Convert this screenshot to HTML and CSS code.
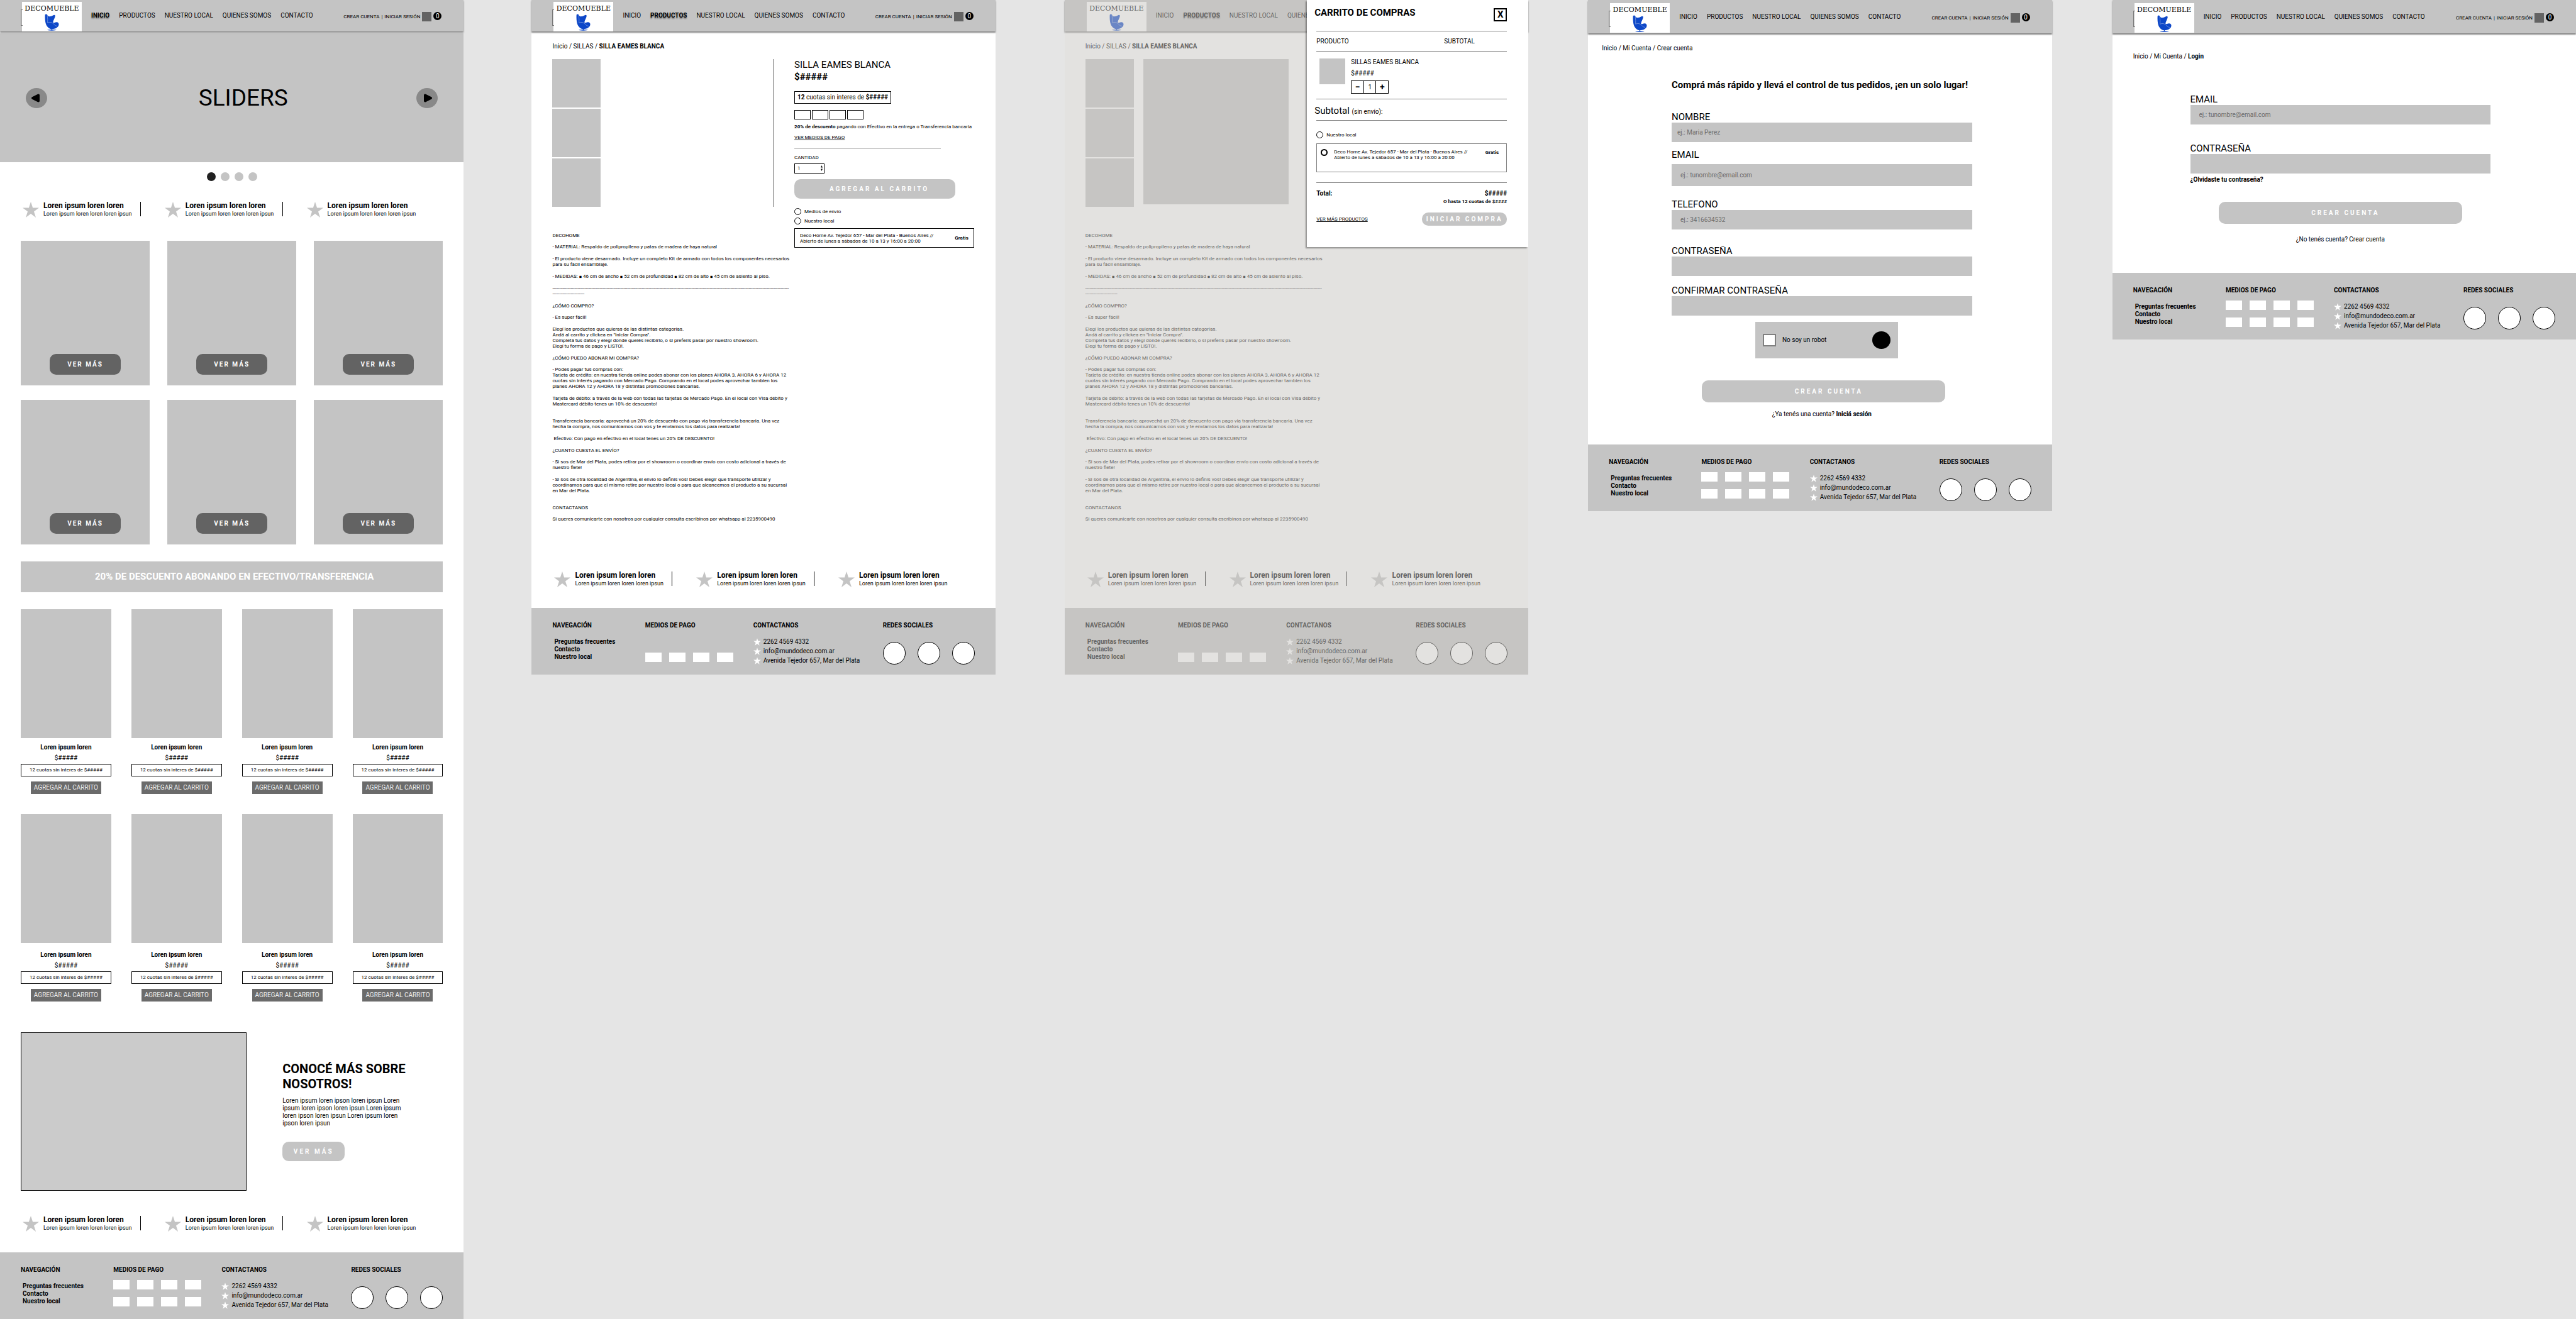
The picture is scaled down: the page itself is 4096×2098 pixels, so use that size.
FILE: index.html
```html
<!DOCTYPE html>
<html lang="es">
<head>
<meta charset="utf-8">
<title>Decomueble</title>
<link rel="stylesheet" href="styles.css">
</head>
<body>
<svg class="defs" aria-hidden="true">
  <symbol id="star" viewBox="0 0 26 25"><path d="M13 0l3.1 9.5H26l-8 5.9 3 9.6-8-5.9-8 5.9 3-9.6-8-5.9h9.9z"/></symbol>
  <symbol id="chair" viewBox="259 126 136 162">
    <path fill="#0d47c8" d="M262 135Q270 123 282 133Q286 150 300 152Q325 151 338 141Q350 131 358 141Q360 154 350 172Q337 196 338 208Q345 214 361 207Q380 202 390 214Q397 228 388 244Q370 268 330 271L330 276Q370 276 370 281Q365 286 326 286Q285 286 283 281Q285 276 323 276L323 271Q295 268 275 235Q258 200 262 135Z"/>
    <path fill="none" stroke="#b9c8ea" stroke-width="3" d="M283 140Q289 180 286 212Q318 196 345 224Q360 244 378 243"/>
  </symbol>
</svg>
<main class="canvas">

<section class="board board-home">
  <header class="top">
    <a class="logo" href="#">DECOMUEBLE<svg class="chair"><use href="#chair"/></svg></a>
    <nav class="menu"><a class="current" href="#">INICIO</a><a href="#">PRODUCTOS</a><a href="#">NUESTRO LOCAL</a><a href="#">QUIENES SOMOS</a><a href="#">CONTACTO</a></nav>
    <div class="account"><a href="#">CREAR CUENTA</a><span>|</span><a href="#">INICIAR SESIÓN</a><i class="bag"></i><b class="count">0</b></div>
  </header>
  <div class="slider">
    <button class="arrow" type="button" aria-label="Anterior"><svg viewBox="0 0 34 32"><path d="M11 16l9-4.500v9z" stroke-width="4" stroke="#000" stroke-linejoin="round"/></svg></button>
    <h1>SLIDERS</h1>
    <button class="arrow" type="button" aria-label="Siguiente"><svg viewBox="0 0 34 32"><path d="M23 16l-9-4.500v9z" stroke-width="4" stroke="#000" stroke-linejoin="round"/></svg></button>
  </div>
  <div class="dots"><i class="on"></i><i></i><i></i><i></i></div>
  <ul class="perks">
    <li><svg><use href="#star"/></svg><p><b>Loren ipsum loren loren</b>Loren ipsum loren loren loren ipsun</p></li>
    <li><svg><use href="#star"/></svg><p><b>Loren ipsum loren loren</b>Loren ipsum loren loren loren ipsun</p></li>
    <li><svg><use href="#star"/></svg><p><b>Loren ipsum loren loren</b>Loren ipsum loren loren loren ipsun</p></li>
  </ul>
  <div class="categories">
    <div><button type="button">VER MÁS</button></div>
    <div><button type="button">VER MÁS</button></div>
    <div><button type="button">VER MÁS</button></div>
    <div><button type="button">VER MÁS</button></div>
    <div><button type="button">VER MÁS</button></div>
    <div><button type="button">VER MÁS</button></div>
  </div>
  <p class="promo">20% DE DESCUENTO ABONANDO EN EFECTIVO/TRANSFERENCIA</p>
  <div class="products">
    <article><div class="photo"></div><h3>Loren ipsum loren</h3><p class="price">$#####</p><p class="fees">12 cuotas sin interes de $#####</p><button type="button">AGREGAR AL CARRITO</button></article>
    <article><div class="photo"></div><h3>Loren ipsum loren</h3><p class="price">$#####</p><p class="fees">12 cuotas sin interes de $#####</p><button type="button">AGREGAR AL CARRITO</button></article>
    <article><div class="photo"></div><h3>Loren ipsum loren</h3><p class="price">$#####</p><p class="fees">12 cuotas sin interes de $#####</p><button type="button">AGREGAR AL CARRITO</button></article>
    <article><div class="photo"></div><h3>Loren ipsum loren</h3><p class="price">$#####</p><p class="fees">12 cuotas sin interes de $#####</p><button type="button">AGREGAR AL CARRITO</button></article>
  </div>
  <div class="products products-more">
    <article><div class="photo"></div><h3>Loren ipsum loren</h3><p class="price">$#####</p><p class="fees">12 cuotas sin interes de $#####</p><button type="button">AGREGAR AL CARRITO</button></article>
    <article><div class="photo"></div><h3>Loren ipsum loren</h3><p class="price">$#####</p><p class="fees">12 cuotas sin interes de $#####</p><button type="button">AGREGAR AL CARRITO</button></article>
    <article><div class="photo"></div><h3>Loren ipsum loren</h3><p class="price">$#####</p><p class="fees">12 cuotas sin interes de $#####</p><button type="button">AGREGAR AL CARRITO</button></article>
    <article><div class="photo"></div><h3>Loren ipsum loren</h3><p class="price">$#####</p><p class="fees">12 cuotas sin interes de $#####</p><button type="button">AGREGAR AL CARRITO</button></article>
  </div>
  <div class="about">
    <div class="about-photo"></div>
    <div class="about-text">
      <h2>CONOCÉ MÁS SOBRE<br>NOSOTROS!</h2>
      <p>Loren ipsum loren ipson loren ipsun Loren<br>ipsum loren ipson loren ipsun Loren ipsum<br>loren ipson loren ipsun Loren ipsum loren<br>ipson loren ipsun</p>
      <button type="button">VER MÁS</button>
    </div>
  </div>
  <ul class="perks perks-end">
    <li><svg><use href="#star"/></svg><p><b>Loren ipsum loren loren</b>Loren ipsum loren loren loren ipsun</p></li>
    <li><svg><use href="#star"/></svg><p><b>Loren ipsum loren loren</b>Loren ipsum loren loren loren ipsun</p></li>
    <li><svg><use href="#star"/></svg><p><b>Loren ipsum loren loren</b>Loren ipsum loren loren loren ipsun</p></li>
  </ul>
  <footer class="foot">
    <div><h4>NAVEGACIÓN</h4><nav class="links"><a href="#">Preguntas frecuentes</a><a href="#">Contacto</a><a href="#">Nuestro local</a></nav></div>
    <div><h4>MEDIOS DE PAGO</h4><div class="cards"><i></i><i></i><i></i><i></i><i></i><i></i><i></i><i></i></div></div>
    <div><h4>CONTACTANOS</h4><ul class="contact"><li><svg><use href="#star"/></svg>2262 4569 4332</li><li><svg><use href="#star"/></svg>info@mundodeco.com.ar</li><li><svg><use href="#star"/></svg>Avenida Tejedor 657, Mar del Plata</li></ul></div>
    <div><h4>REDES SOCIALES</h4><div class="social"><i></i><i></i><i></i></div></div>
  </footer>
</section>

<section class="board board-product">
  <header class="top">
    <a class="logo" href="#">DECOMUEBLE<svg class="chair"><use href="#chair"/></svg></a>
    <nav class="menu"><a href="#">INICIO</a><a class="current" href="#">PRODUCTOS</a><a href="#">NUESTRO LOCAL</a><a href="#">QUIENES SOMOS</a><a href="#">CONTACTO</a></nav>
    <div class="account"><a href="#">CREAR CUENTA</a><span>|</span><a href="#">INICIAR SESIÓN</a><i class="bag"></i><b class="count">0</b></div>
  </header>
  <p class="crumbs">Inicio / SILLAS / <b>SILLA EAMES BLANCA</b></p>
  <div class="detail">
    <div>
      <div class="gallery"><div class="thumbs"><i></i><i></i><i></i></div></div>
      <div class="description">
        <h5>DECOHOME</h5>
        <p>- MATERIAL: Respaldo de polipropileno y patas de madera de haya natural</p>
        <p>- El producto viene desarmado. Incluye un completo Kit de armado con todos los componentes necesarios<br>para su fácil ensamblaje.</p>
        <p>- MEDIDAS: <span class="sq">◾</span> 46 cm de ancho <span class="sq">◾</span> 52 cm de profundidad <span class="sq">◾</span> 82 cm de alto <span class="sq">◾</span> 45 cm de asiento al piso.</p>
        <p>--------------------------------------------------------------------------------------------------------------------------------------------------------------------------<br>-----------------------</p>
        <h5>¿CÓMO COMPRO?</h5>
        <p>- Es super fácil!</p>
        <p>Elegí los productos que quieras de las distintas categorías.<br>Andá al carrito y clickea en "Iniciar Compra".<br>Completá tus datos y elegí donde querés recibirlo, o si preferís pasar por nuestro showroom.<br>Elegí tu forma de pago y LISTO!.</p>
        <h5>¿CÓMO PUEDO ABONAR MI COMPRA?</h5>
        <p>- Podes pagar tus compras con:<br>Tarjeta de crédito: en nuestra tienda online podes abonar con los planes AHORA 3, AHORA 6 y AHORA 12<br>cuotas sin interés pagando con Mercado Pago. Comprando en el local podes aprovechar tambien los<br>planes AHORA 12 y AHORA 18 y distintas promociones bancarias.</p>
        <p class="wide">Tarjeta de débito: a través de la web con todas las tarjetas de Mercado Pago. En el local con Visa débito y<br>Mastercard débito tenes un 10% de descuento!</p>
        <p>Transferencia bancaria: aprovechá un 20% de descuento con pago via transferencia bancaria. Una vez<br>hecha la compra, nos comunicamos con vos y te enviamos los datos para realizarla!</p>
        <p>&nbsp;Efectivo: Con pago en efectivo en el local tenes un 20% DE DESCUENTO!</p>
        <h5>¿CUANTO CUESTA EL ENVÍO?</h5>
        <p>- Si sos de Mar del Plata, podes retirar por el showroom o coordinar envío con costo adicional a través de<br>nuestro flete!</p>
        <p class="wide">- Si sos de otra localidad de Argentina, el envío lo definís vos! Debes elegír que transporte utilizar y<br>coordinamos para que el mismo retire por nuestro local o para que alcancemos el producto a su sucursal<br>en Mar del Plata.</p>
        <h5>CONTACTANOS</h5>
        <p>Si queres comunicarte con nosotros por cualquier consulta escribinos por whatsapp al 2235900490</p>
      </div>
    </div>
    <form class="buy">
      <h2>SILLA EAMES BLANCA</h2>
      <p class="cost">$#####</p>
      <p class="installments"><b>12</b> cuotas sin interes de <b>$#####</b></p>
      <div class="pay"><i></i><i></i><i></i><i></i></div>
      <p class="offer"><b>20% de descuento</b> pagando con Efectivo en la entrega o Transferencia bancaria</p>
      <a class="more" href="#">VER MEDIOS DE PAGO</a>
      <hr>
      <label class="qty-label" for="qty">CANTIDAD</label>
      <div class="qty"><select id="qty"><option>1</option></select><svg viewBox="0 0 5 15"><path d="M2.500 0L5 6H0zM0 9h5l-2.500 6z"/></svg></div>
      <button class="pill" type="button">AGREGAR AL CARRITO</button>
      <label class="choice"><input type="radio" name="ship">Medios de envío</label>
      <label class="choice"><input type="radio" name="ship">Nuestro local</label>
      <div class="store"><p>Deco Home Av. Tejedor 657 - Mar del Plata - Buenos Aires //<br>Abierto de lunes a sábados de 10 a 13 y 16:00 a 20:00</p><b>Gratis</b></div>
    </form>
  </div>
  <ul class="perks">
    <li><svg><use href="#star"/></svg><p><b>Loren ipsum loren loren</b>Loren ipsum loren loren loren ipsun</p></li>
    <li><svg><use href="#star"/></svg><p><b>Loren ipsum loren loren</b>Loren ipsum loren loren loren ipsun</p></li>
    <li><svg><use href="#star"/></svg><p><b>Loren ipsum loren loren</b>Loren ipsum loren loren loren ipsun</p></li>
  </ul>
  <footer class="foot">
    <div><h4>NAVEGACIÓN</h4><nav class="links"><a href="#">Preguntas frecuentes</a><a href="#">Contacto</a><a href="#">Nuestro local</a></nav></div>
    <div><h4>MEDIOS DE PAGO</h4><div class="cards cards-low"><i></i><i></i><i></i><i></i></div></div>
    <div><h4>CONTACTANOS</h4><ul class="contact"><li><svg><use href="#star"/></svg>2262 4569 4332</li><li><svg><use href="#star"/></svg>info@mundodeco.com.ar</li><li><svg><use href="#star"/></svg>Avenida Tejedor 657, Mar del Plata</li></ul></div>
    <div><h4>REDES SOCIALES</h4><div class="social"><i></i><i></i><i></i></div></div>
  </footer>
</section>

<section class="board board-cart">
  <header class="top">
    <a class="logo" href="#">DECOMUEBLE<svg class="chair"><use href="#chair"/></svg></a>
    <nav class="menu"><a href="#">INICIO</a><a class="current" href="#">PRODUCTOS</a><a href="#">NUESTRO LOCAL</a><a href="#">QUIENES SOMOS</a></nav>
  </header>
  <p class="crumbs">Inicio / SILLAS / <b>SILLA EAMES BLANCA</b></p>
  <div class="detail">
    <div>
      <div class="gallery"><div class="thumbs"><i></i><i></i><i></i></div><div class="main-photo"></div></div>
      <div class="description">
        <h5>DECOHOME</h5>
        <p>- MATERIAL: Respaldo de polipropileno y patas de madera de haya natural</p>
        <p>- El producto viene desarmado. Incluye un completo Kit de armado con todos los componentes necesarios<br>para su fácil ensamblaje.</p>
        <p>- MEDIDAS: <span class="sq">◾</span> 46 cm de ancho <span class="sq">◾</span> 52 cm de profundidad <span class="sq">◾</span> 82 cm de alto <span class="sq">◾</span> 45 cm de asiento al piso.</p>
        <p>--------------------------------------------------------------------------------------------------------------------------------------------------------------------------<br>-----------------------</p>
        <h5>¿CÓMO COMPRO?</h5>
        <p>- Es super fácil!</p>
        <p>Elegí los productos que quieras de las distintas categorías.<br>Andá al carrito y clickea en "Iniciar Compra".<br>Completá tus datos y elegí donde querés recibirlo, o si preferís pasar por nuestro showroom.<br>Elegí tu forma de pago y LISTO!.</p>
        <h5>¿CÓMO PUEDO ABONAR MI COMPRA?</h5>
        <p>- Podes pagar tus compras con:<br>Tarjeta de crédito: en nuestra tienda online podes abonar con los planes AHORA 3, AHORA 6 y AHORA 12<br>cuotas sin interés pagando con Mercado Pago. Comprando en el local podes aprovechar tambien los<br>planes AHORA 12 y AHORA 18 y distintas promociones bancarias.</p>
        <p class="wide">Tarjeta de débito: a través de la web con todas las tarjetas de Mercado Pago. En el local con Visa débito y<br>Mastercard débito tenes un 10% de descuento!</p>
        <p>Transferencia bancaria: aprovechá un 20% de descuento con pago via transferencia bancaria. Una vez<br>hecha la compra, nos comunicamos con vos y te enviamos los datos para realizarla!</p>
        <p>&nbsp;Efectivo: Con pago en efectivo en el local tenes un 20% DE DESCUENTO!</p>
        <h5>¿CUANTO CUESTA EL ENVÍO?</h5>
        <p>- Si sos de Mar del Plata, podes retirar por el showroom o coordinar envío con costo adicional a través de<br>nuestro flete!</p>
        <p class="wide">- Si sos de otra localidad de Argentina, el envío lo definís vos! Debes elegír que transporte utilizar y<br>coordinamos para que el mismo retire por nuestro local o para que alcancemos el producto a su sucursal<br>en Mar del Plata.</p>
        <h5>CONTACTANOS</h5>
        <p>Si queres comunicarte con nosotros por cualquier consulta escribinos por whatsapp al 2235900490</p>
      </div>
    </div>
  </div>
  <ul class="perks">
    <li><svg><use href="#star"/></svg><p><b>Loren ipsum loren loren</b>Loren ipsum loren loren loren ipsun</p></li>
    <li><svg><use href="#star"/></svg><p><b>Loren ipsum loren loren</b>Loren ipsum loren loren loren ipsun</p></li>
    <li><svg><use href="#star"/></svg><p><b>Loren ipsum loren loren</b>Loren ipsum loren loren loren ipsun</p></li>
  </ul>
  <footer class="foot">
    <div><h4>NAVEGACIÓN</h4><nav class="links"><a href="#">Preguntas frecuentes</a><a href="#">Contacto</a><a href="#">Nuestro local</a></nav></div>
    <div><h4>MEDIOS DE PAGO</h4><div class="cards cards-low"><i></i><i></i><i></i><i></i></div></div>
    <div><h4>CONTACTANOS</h4><ul class="contact"><li><svg><use href="#star"/></svg>2262 4569 4332</li><li><svg><use href="#star"/></svg>info@mundodeco.com.ar</li><li><svg><use href="#star"/></svg>Avenida Tejedor 657, Mar del Plata</li></ul></div>
    <div><h4>REDES SOCIALES</h4><div class="social"><i></i><i></i><i></i></div></div>
  </footer>
  <div class="veil"></div>
  <aside class="cart">
    <div class="cart-head"><h2>CARRITO DE COMPRAS</h2><button type="button">X</button></div>
    <table>
      <thead><tr><th class="col-item">PRODUCTO</th><th>SUBTOTAL</th></tr></thead>
      <tbody><tr><td colspan="2">
        <div class="item">
          <div class="item-photo"></div>
          <div><p>SILLAS EAMES BLANCA</p><p class="item-price">$#####</p>
          <div class="stepper"><button type="button">−</button><input type="text" value="1" aria-label="Cantidad"><button type="button">+</button></div></div>
        </div>
      </td></tr></tbody>
    </table>
    <p class="subtotal">Subtotal <small>(sin envío):</small></p>
    <label class="choice"><input type="radio" name="pickup">Nuestro local</label>
    <label class="pickup"><input type="radio" name="pickup"><span>Deco Home Av. Tejedor 657 - Mar del Plata - Buenos Aires //<br>Abierto de lunes a sábados de 10 a 13 y 16:00 a 20:00</span><b>Gratis</b></label>
    <div class="total"><span>Total:</span><span>$#####</span></div>
    <p class="upto">O hasta 12 cuotas de $####</p>
    <div class="cart-foot"><a class="more" href="#">VER MÁS PRODUCTOS</a><button type="button">INICIAR COMPRA</button></div>
  </aside>
</section>

<section class="board board-signup">
  <header class="top top-tall">
    <a class="logo" href="#">DECOMUEBLE<svg class="chair"><use href="#chair"/></svg></a>
    <nav class="menu"><a href="#">INICIO</a><a href="#">PRODUCTOS</a><a href="#">NUESTRO LOCAL</a><a href="#">QUIENES SOMOS</a><a href="#">CONTACTO</a></nav>
    <div class="account"><a href="#">CREAR CUENTA</a><span>|</span><a href="#">INICIAR SESIÓN</a><i class="bag"></i><b class="count">0</b></div>
  </header>
  <p class="crumbs">Inicio / Mi Cuenta / Crear cuenta</p>
  <form class="form">
    <h2>Comprá más rápido y llevá el control de tus pedidos, ¡en un solo lugar!</h2>
    <label for="name">NOMBRE</label><input class="box" id="name" type="text" placeholder="ej.: Maria Perez">
    <label class="after-name" for="mail">EMAIL</label><input class="box box-tall" id="mail" type="email" placeholder="ej.: tunombre@email.com">
    <label class="after-mail" for="tel">TELEFONO</label><input class="box box-in" id="tel" type="tel" placeholder="ej.: 3416634532">
    <label class="after-tel" for="pass">CONTRASEÑA</label><input class="box" id="pass" type="password">
    <label class="after-pass" for="pass2">CONFIRMAR CONTRASEÑA</label><input class="box" id="pass2" type="password">
    <div class="captcha"><input type="checkbox" id="robot"><label for="robot">No soy un robot</label><i></i></div>
    <button class="pill" type="button">CREAR CUENTA</button>
    <p class="note">¿Ya tenés una cuenta? <a href="#"><b>Iniciá sesión</b></a></p>
  </form>
  <footer class="foot">
    <div><h4>NAVEGACIÓN</h4><nav class="links"><a href="#">Preguntas frecuentes</a><a href="#">Contacto</a><a href="#">Nuestro local</a></nav></div>
    <div><h4>MEDIOS DE PAGO</h4><div class="cards"><i></i><i></i><i></i><i></i><i></i><i></i><i></i><i></i></div></div>
    <div><h4>CONTACTANOS</h4><ul class="contact"><li><svg><use href="#star"/></svg>2262 4569 4332</li><li><svg><use href="#star"/></svg>info@mundodeco.com.ar</li><li><svg><use href="#star"/></svg>Avenida Tejedor 657, Mar del Plata</li></ul></div>
    <div><h4>REDES SOCIALES</h4><div class="social"><i></i><i></i><i></i></div></div>
  </footer>
</section>

<section class="board board-login">
  <header class="top top-tall">
    <a class="logo" href="#">DECOMUEBLE<svg class="chair"><use href="#chair"/></svg></a>
    <nav class="menu"><a href="#">INICIO</a><a href="#">PRODUCTOS</a><a href="#">NUESTRO LOCAL</a><a href="#">QUIENES SOMOS</a><a href="#">CONTACTO</a></nav>
    <div class="account"><a href="#">CREAR CUENTA</a><span>|</span><a href="#">INICIAR SESIÓN</a><i class="bag"></i><b class="count">0</b></div>
  </header>
  <p class="crumbs">Inicio / Mi Cuenta / <b>Login</b></p>
  <form class="form">
    <label for="user">EMAIL</label><input class="box box-in" id="user" type="email" placeholder="ej.: tunombre@email.com">
    <label class="after-user" for="key">CONTRASEÑA</label><input class="box" id="key" type="password">
    <a class="forgot" href="#">¿Olvidaste tu contraseña?</a>
    <button class="pill" type="button">CREAR CUENTA</button>
    <p class="note">¿No tenés cuenta? <a href="#">Crear cuenta</a></p>
  </form>
  <footer class="foot">
    <div><h4>NAVEGACIÓN</h4><nav class="links"><a href="#">Preguntas frecuentes</a><a href="#">Contacto</a><a href="#">Nuestro local</a></nav></div>
    <div><h4>MEDIOS DE PAGO</h4><div class="cards"><i></i><i></i><i></i><i></i><i></i><i></i><i></i><i></i></div></div>
    <div><h4>CONTACTANOS</h4><ul class="contact"><li><svg><use href="#star"/></svg>2262 4569 4332</li><li><svg><use href="#star"/></svg>info@mundodeco.com.ar</li><li><svg><use href="#star"/></svg>Avenida Tejedor 657, Mar del Plata</li></ul></div>
    <div><h4>REDES SOCIALES</h4><div class="social"><i></i><i></i><i></i></div></div>
  </footer>
</section>

</main>
</body>
</html>
```
FILE: styles.css
```css
* { box-sizing: border-box; margin: 0; padding: 0; }

body {
  background: #e5e5e5;
  color: #000;
  font: 10px/12px Roboto, "Liberation Sans", sans-serif;
}

a { color: inherit; text-decoration: none; white-space: nowrap; }
ul { list-style: none; }
i { display: block; font-style: normal; }
button, input, select { font: inherit; color: inherit; border: 0; background: none; }
h1, h2, h3, h4, h5 { font-size: inherit; line-height: inherit; font-weight: inherit; }
.defs { display: none; }

/* Boards side by side */
.canvas { display: flex; align-items: flex-start; }
.board { flex: 1 1 0; min-width: 0; background: #fff; position: relative; display: flex; flex-direction: column; }
.board-product { margin-left: 108px; }
.board-cart { margin-left: 110px; }
.board-signup { margin-left: 95px; }
.board-login { margin-left: 96px; }

/* Header */
.top {
  display: flex;
  align-items: center;
  padding: 3px 35px 0;
  background: #c4c4c4;
  box-shadow: 0 2px 2px rgba(0, 0, 0, .5);
  position: relative;
}
.top-tall { padding-top: 5px; padding-bottom: 1px; }
.logo {
  position: relative;
  display: flex;
  flex-direction: column;
  align-items: center;
  flex: none;
  width: 95px;
  height: 47px;
  padding-top: 4px;
  background: #fff;
  font: 11px/14px "DejaVu Serif", serif;
}
.logo::before {
  content: "";
  position: absolute;
  left: -2px;
  top: 12px;
  width: 2px;
  height: 24px;
  border: 1px solid #777;
  border-right: 0;
}
.board-cart .logo::before { display: none; }
.chair { width: 23px; height: 27px; margin-top: 1px; }
.menu { display: flex; gap: 15px; margin-left: 15px; padding-bottom: 4px; }
.menu .current { font-weight: 700; text-shadow: 0 2px 2px rgba(0, 0, 0, .4); }
.account { display: flex; align-items: center; gap: 3px; margin-left: auto; font-size: 8px; }
.bag { width: 15px; height: 15px; background: #636363; }
.count {
  width: 13px;
  height: 13px;
  margin-bottom: 2px;
  border-radius: 50%;
  background: #000;
  color: #fff;
  font: 10px/13px Roboto, sans-serif;
  text-align: center;
}

/* Slider */
.slider {
  display: flex;
  align-items: center;
  justify-content: space-between;
  height: 205px;
  margin-top: 3px;
  padding: 0 41px;
  background: #c4c4c4;
}
.slider h1 { padding-left: 36px; font-size: 37px; line-height: 40px; }
.arrow { width: 34px; height: 32px; border-radius: 50%; background: #898989; }
.arrow svg { display: block; }
.dots { display: flex; justify-content: center; gap: 8px; margin-top: 16px; }
.dots i { width: 14px; height: 14px; border-radius: 50%; background: #c4c4c4; }
.dots .on { background: #212121; }

/* Perks */
.perks {
  display: grid;
  grid-template-columns: repeat(3, 1fr);
  gap: 38px;
  height: 26px;
  margin-top: 33px;
  padding: 0 62px 0 36px;
}
.perks li { position: relative; display: flex; gap: 7px; white-space: nowrap; font-size: 9px; line-height: 13px; }
.perks svg { flex: none; width: 26px; height: 25px; fill: #c4c4c4; }
.perks b { display: block; font-size: 12px; }
.perks li:not(:last-child)::after { content: ""; position: absolute; right: 0; top: 0; width: 1px; height: 23px; background: #000; }

/* Categories */
.categories { display: grid; grid-template-columns: repeat(3, 1fr); gap: 23px 28px; margin-top: 36px; padding: 0 33px; }
.categories div { display: flex; align-items: flex-end; justify-content: center; height: 230px; padding-bottom: 17px; background: #c4c4c4; }
.categories button {
  width: 113px;
  height: 33px;
  border-radius: 10px;
  background: #636363;
  color: #fff;
  font-weight: 700;
  letter-spacing: 2px;
}
.promo { margin: 27px 33px 0; padding-left: 8px; background: #c4c4c4; color: #fff; font-size: 15px; line-height: 49px; font-weight: 700; text-align: center; }

/* Product cards */
.products { display: grid; grid-template-columns: repeat(4, 1fr); gap: 32px; margin-top: 27px; padding: 0 33px; }
.products-more { margin-top: 32px; }
.products article { display: flex; flex-direction: column; align-items: center; }
.photo { align-self: stretch; height: 205px; background: #c4c4c4; }
.products h3 { margin-top: 9px; font-weight: 700; }
.products-more h3 { margin-top: 13px; }
.price { margin-top: 5px; }
.fees { align-self: stretch; margin-top: 3px; border: 1px solid #000; font-size: 8px; line-height: 18px; text-align: center; }
.products button { width: 112px; height: 20px; margin-top: 8px; background: #6b6b6b; color: #eee; }

/* About */
.about { display: grid; grid-template-columns: 359fr 255fr; gap: 57px; margin-top: 49px; padding: 0 33px; }
.about-photo { height: 252px; border: 1px solid #000; background: #cbcbcb; }
.about-text { padding-top: 46px; }
.about h2 { font-size: 20px; line-height: 24px; font-weight: 700; }
.about p { margin-top: 9px; }
.about button { width: 99px; height: 31px; margin-top: 23px; border-radius: 10px; background: #c4c4c4; color: #fff; font-weight: 700; letter-spacing: 3px; }
.perks-end { margin-top: 40px; }

/* Footer */
.foot {
  display: grid;
  grid-template-columns: 148fr 173fr 207fr 144fr;
  height: 106px;
  margin-top: 32px;
  padding: 22px 33px 0;
  background: #c4c4c4;
}
.foot h4 { font-weight: 700; }
.links { display: flex; flex-direction: column; margin-top: 14px; padding-left: 3px; font-weight: 700; }
.cards { display: grid; grid-template-columns: repeat(4, 26px); gap: 12px; margin-top: 10px; }
.cards i { height: 15px; background: #fff; }
.cards-low { margin-top: 37px; }
.contact { margin-top: 12px; line-height: 15px; white-space: nowrap; }
.contact li { display: flex; align-items: center; gap: 4px; }
.contact svg { width: 12px; height: 12px; fill: #fff; }
.social { display: flex; gap: 19px; margin-top: 20px; }
.social i { flex: none; width: 36px; height: 36px; border: 1px solid #000; border-radius: 50%; background: #fff; }

/* Product detail */
.crumbs { margin: 18px 33px 0; }
.detail { display: grid; grid-template-columns: 385fr 286fr; margin-top: 14px; padding: 0 34px 0 33px; }
.gallery { display: flex; gap: 15px; margin-right: 33px; border-right: 1px solid #7a7a7a; }
.thumbs { display: grid; gap: 2px; width: 77px; }
.thumbs i { height: 77px; background: #c4c4c4; }
.main-photo { width: 231px; height: 231px; background: #c4c4c4; }
.board-cart .gallery { border-color: transparent; }
.description { margin-top: 41px; font-size: 8px; line-height: 9px; white-space: nowrap; }
.description p { margin-bottom: 10px; }
.description h5 { margin-bottom: 9px; }
.description .wide { margin-bottom: 18px; }
.description p:last-child { margin-bottom: 0; }
.sq { font-family: "DejaVu Sans", sans-serif; font-size: 6px; line-height: 1px; }
.board-product .perks, .board-cart .perks { margin-top: 79px; }

.buy { display: flex; flex-direction: column; align-items: flex-start; font-size: 8px; line-height: 10px; white-space: nowrap; }
.buy h2 { font-size: 15px; line-height: 18px; }
.cost { margin-top: 1px; font-size: 15px; line-height: 18px; font-weight: 700; }
.installments { margin-top: 14px; padding: 0 4px; border: 1px solid #000; font-size: 10px; line-height: 18px; }
.pay { display: flex; gap: 2px; margin-top: 10px; }
.pay i { width: 26px; height: 15px; border: 1px solid #000; }
.offer { margin-top: 7px; }
.more { font-size: 8px; line-height: 10px; text-decoration: underline; }
.buy .more { margin-top: 7px; }
.buy hr { width: 233px; height: 1px; margin-top: 12px; border: 0; background: #b8b8b8; }
.qty-label { margin-top: 9px; }
.qty { position: relative; margin-top: 4px; }
.qty select { display: block; width: 48px; height: 16px; padding-left: 4px; border: 1px solid #000; line-height: 14px; appearance: none; }
.qty svg { position: absolute; right: 2px; top: 3px; width: 5px; height: 9px; }
.pill { border-radius: 10px; background: #c4c4c4; color: #fff; font-size: 10px; font-weight: 700; letter-spacing: 3px; }
.buy .pill { width: 256px; height: 31px; margin: 9px 0 11px; padding-left: 14px; }
.choice { display: flex; align-items: center; gap: 5px; margin-top: 4px; font-size: 8px; line-height: 11px; }
.choice input, .pickup input { flex: none; width: 11px; height: 11px; border: 1px solid #000; border-radius: 50%; appearance: none; }
.store {
  display: flex;
  align-self: stretch;
  align-items: center;
  justify-content: space-between;
  height: 31px;
  margin-top: 6px;
  padding: 0 8px;
  border: 1px solid #000;
  line-height: 9px;
}

/* Cart */
.veil { position: absolute; inset: 0; background: rgba(199, 197, 193, .5); }
.cart {
  position: absolute;
  top: 0;
  right: 0;
  width: 352px;
  padding: 13px 34px 34px 15px;
  background: #fff;
  box-shadow: -2px 2px 2px rgba(0, 0, 0, .35);
}
.cart-head { display: flex; justify-content: space-between; margin-left: -3px; }
.cart-head h2 { font-size: 15px; line-height: 15px; font-weight: 700; }
.cart-head button { width: 21px; height: 21px; border: 2px solid #000; font-size: 15px; line-height: 17px; font-weight: 700; }
.cart table { width: 100%; margin-top: 15px; border-collapse: collapse; table-layout: fixed; }
.cart th { height: 32px; border: solid #808080; border-width: 1px 0; font-weight: 400; text-align: left; }
.col-item { width: 67%; }
.cart td { height: 76px; padding: 11px 0 8px 5px; border-bottom: 1px solid #808080; }
.item { display: flex; gap: 9px; }
.item-photo { width: 41px; height: 41px; background: #c4c4c4; }
.item-price { margin-top: 6px; }
.stepper { display: flex; width: 60px; height: 21px; margin-top: 5px; border: 1px solid #000; }
.stepper button { flex: 1; font-size: 14px; line-height: 19px; font-weight: 700; }
.stepper input { width: 20px; border: solid #000; border-width: 0 1px; text-align: center; }
.subtotal { padding: 9px 0 6px; border-bottom: 1px solid #808080; font-size: 15px; line-height: 18px; text-indent: -3px; }
.subtotal small { font-size: 10px; line-height: 12px; }
.cart .choice { margin-top: 17px; }
.pickup { display: flex; height: 46px; margin-top: 8px; padding: 8px 12px 0 6px; border: 1px solid #808080; font-size: 8px; line-height: 9px; }
.pickup input { border-width: 2px; }
.pickup span { margin-left: 10px; white-space: nowrap; }
.pickup b { margin-left: auto; line-height: 11px; }
.total { display: flex; justify-content: space-between; margin-top: 16px; padding-top: 11px; border-top: 1px solid #808080; font-weight: 700; }
.upto { margin-top: 2px; font-size: 8px; line-height: 10px; font-weight: 700; text-align: right; }
.cart-foot { display: flex; align-items: center; justify-content: space-between; margin-top: 12px; }
.cart-foot button { width: 135px; height: 21px; border-radius: 10px; background: #c4c4c4; color: #fff; font-weight: 700; letter-spacing: 3px; white-space: nowrap; }

/* Account forms */
.board-signup .crumbs { margin-left: 22px; }
.board-login .crumbs { margin-top: 31px; }
.form { display: flex; flex-direction: column; width: 64.8%; margin: 43px 0 10px 18%; }
.board-login .form { margin: 53px 0 15px 16.8%; }
.form h2 { margin-bottom: 33px; font-size: 15px; line-height: 18px; font-weight: 700; white-space: nowrap; }
.form > label { font-size: 15px; line-height: 18px; }
.form .after-name { margin: 11px 0 6px; }
.form .after-mail { margin-top: 20px; }
.form .after-tel { margin-top: 25px; }
.form .after-pass { margin-top: 14px; }
.form .after-user { margin-top: 29px; }
.box { height: 31px; padding: 0 9px; background: #c4c4c4; font-size: 10px; }
.box-tall { height: 35px; padding: 0 14px; }
.box-in { padding: 0 14px; }
.box::placeholder { color: #6b6b6b; opacity: 1; }
.captcha { display: flex; align-items: center; width: 227px; height: 58px; margin: 10px 0 0 133px; padding: 0 12px; background: #c4c4c4; }
.captcha input { width: 21px; height: 20px; border: 2px solid #808080; background: #fff; appearance: none; }
.captcha label { margin-left: 10px; }
.captcha i { width: 29px; height: 28px; margin-left: auto; border-radius: 50%; background: #000; }
.form .pill { align-self: center; width: 81%; height: 35px; margin-top: 35px; padding-left: 16px; }
.board-signup .pill { margin-left: 6px; }
.note { margin-top: 13px; text-align: center; }
.forgot { margin-top: 4px; font-weight: 700; }
.board-login .form .pill { margin-top: 29px; }
.board-login .note { margin-top: 19px; }
```
